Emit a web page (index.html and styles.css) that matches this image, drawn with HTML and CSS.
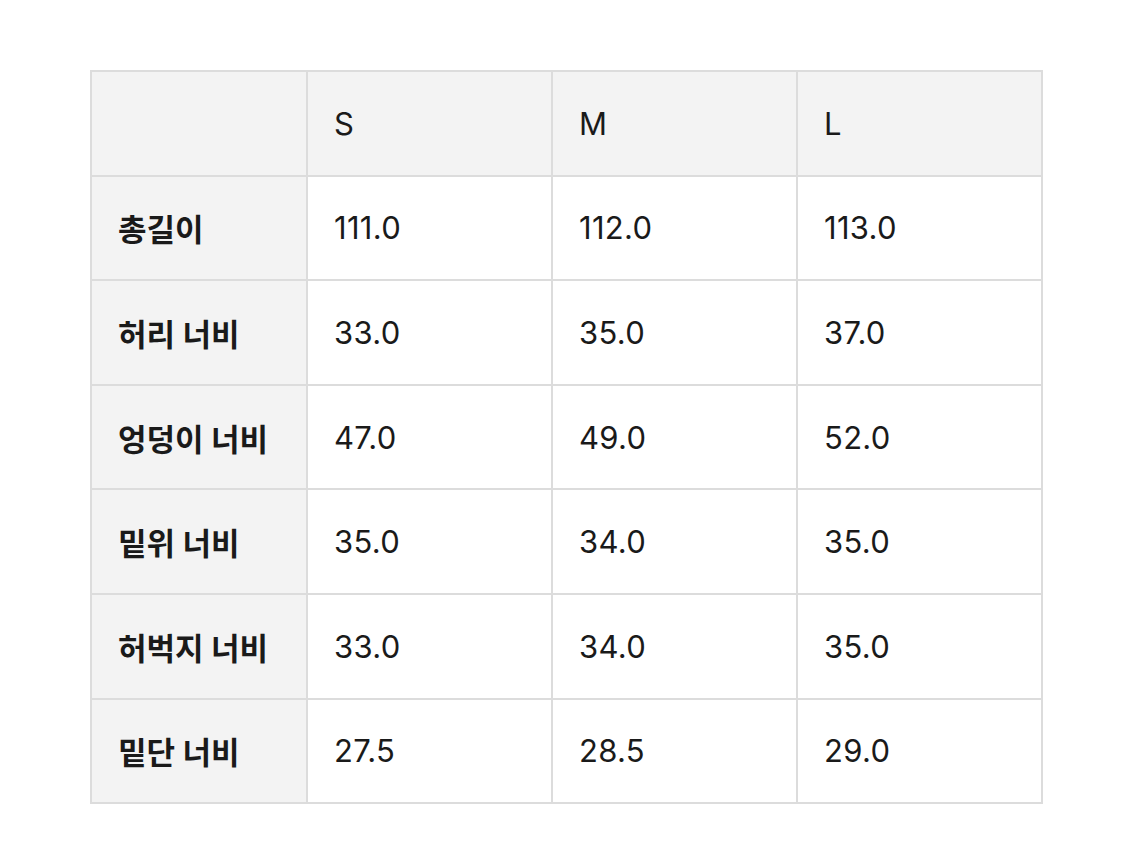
FILE: index.html
```html
<!DOCTYPE html>
<html lang="ko">
<head>
<meta charset="utf-8">
<link rel="stylesheet" href="styles.css">
</head>
<body>
<div class="page">
<table class="size">
<colgroup><col class="c0"><col class="c1"><col class="c1"><col class="c1"></colgroup>
<tr class="head"><th></th><th>S</th><th>M</th><th>L</th></tr>
<tr><th>총길이</th><td>111.0</td><td>112.0</td><td>113.0</td></tr>
<tr><th>허리 너비</th><td>33.0</td><td>35.0</td><td>37.0</td></tr>
<tr><th>엉덩이 너비</th><td>47.0</td><td>49.0</td><td>52.0</td></tr>
<tr><th>밑위 너비</th><td>35.0</td><td>34.0</td><td>35.0</td></tr>
<tr><th>허벅지 너비</th><td>33.0</td><td>34.0</td><td>35.0</td></tr>
<tr><th>밑단 너비</th><td>27.5</td><td>28.5</td><td>29.0</td></tr>
</table>
</div>
</body>
</html>
```
FILE: styles.css
```css
html, body { margin: 0; padding: 0; background: #fff; }
.page { padding: 70px 0 0 90px; }
.size {
  border-collapse: collapse;
  table-layout: fixed;
  width: 953px;
  font-family: Inter, "Noto Sans CJK KR", sans-serif;
  font-size: 31px;
  color: #1a1a1a;
}
.c0 { width: 216px; }
.c1 { width: 245px; }
.size th, .size td {
  border: 2px solid #dcdcdc;
  height: 104.6px;
  padding: 0 0 0 26px;
  text-align: left;
  vertical-align: middle;
  box-sizing: border-box;
}
.size th { background: #f3f3f3; font-weight: 700; }
.size .head th { font-weight: 400; }
.size td { background: #fff; font-weight: 400; letter-spacing: 0.3px; }
```
